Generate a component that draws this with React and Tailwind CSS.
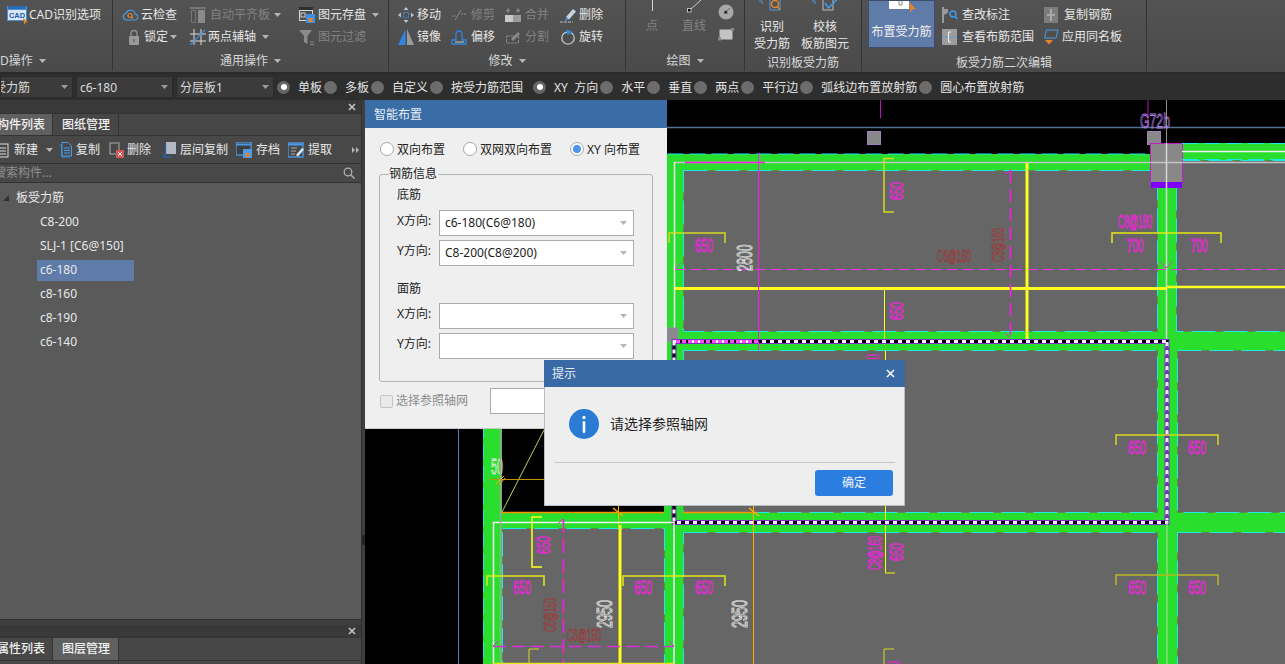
import React from "react";

const FONT = "font-['Noto_Sans','Noto_Sans_CJK_SC',sans-serif]";
const CAD_FONT = "'Liberation Sans', sans-serif";

const Caret = ({ className = "" }) => (
  <svg width="7" height="4" viewBox="0 0 7 4" className={"shrink-0 " + className}>
    <path d="M0 0h7L3.5 4z" fill="#b5b5b5" />
  </svg>
);

const S = ({ children }) => (
  <svg width="16" height="16" viewBox="0 0 16 16" fill="none" className="shrink-0">
    {children}
  </svg>
);

// ribbon and toolbar icons
const icons = {
  cad: (
    <svg width="22" height="20" viewBox="0 0 22 20" className="shrink-0">
      <rect x="0" y="1" width="20" height="15" fill="#4a90d9" />
      <rect x="1" y="1" width="18" height="3" fill="#2a6cb0" />
      <rect x="1" y="5" width="18" height="10" fill="#d8e6f5" />
      <text x="10" y="13" textAnchor="middle" fontSize="7.5" fontWeight="700" fontFamily={CAD_FONT} fill="#1f5fa8">CAD</text>
      <path d="M16 13l5 4-2.5.5-1 2.5z" fill="#e8842a" />
    </svg>
  ),
  cloud: (
    <S>
      <path d="M4 13h8.5a3 3 0 0 0 .5-6 4.5 4.5 0 0 0-8.6-1A3.6 3.6 0 0 0 4 13z" stroke="#4a9be8" strokeWidth="1.2" />
      <circle cx="8" cy="8.5" r="2" stroke="#e8842a" strokeWidth="1.2" />
      <path d="M9.5 10l1.5 1.5" stroke="#e8842a" strokeWidth="1.2" />
    </S>
  ),
  align: (
    <S>
      <path d="M0 1h16" stroke="#777" strokeWidth="2" />
      <rect x="1.5" y="3.5" width="4" height="12" stroke="#777" />
      <rect x="8" y="3" width="7" height="13" fill="#8a8a8a" />
    </S>
  ),
  save: (
    <S>
      <rect x="0" y="0" width="14" height="14" fill="#d8d8d8" />
      <rect x="0" y="0" width="14" height="3" fill="#2e2e2e" />
      <rect x="1" y="4" width="12" height="9" fill="#4d4d4d" />
      <rect x="2" y="6" width="4" height="4" stroke="#cfcfcf" />
      <rect x="7" y="7" width="9" height="9" fill="#3f8fe0" />
      <rect x="9.5" y="11" width="4" height="4" fill="#e8842a" />
    </S>
  ),
  lock: (
    <S>
      <path d="M5 7V4.5a3 3 0 0 1 6 0V7" stroke="#8f8f8f" strokeWidth="1.4" />
      <rect x="3" y="7" width="10" height="9" rx="1" fill="#9a9a9a" />
      <path d="M8 10v3" stroke="#666" strokeWidth="1.4" />
    </S>
  ),
  axis: (
    <S>
      <path d="M4 0v16M11 0v16M0 5h16M0 12h16" stroke="#d8d8d8" />
      <path d="M0 16L15 1" stroke="#3f8fe0" strokeWidth="1.2" />
    </S>
  ),
  filter: (
    <S>
      <path d="M0 1h13L8.5 7v8L5 13V7z" fill="#8a8a8a" />
      <path d="M11 13h4M11 15.5h4" stroke="#8a8a8a" />
    </S>
  ),
  move: (
    <S>
      <path d="M8 0l2.5 3h-5zM8 16l2.5-3h-5zM0 8l3-2.5v5zM16 8l-3-2.5v5z" fill="#b8c4d0" />
      <rect x="5.5" y="5.5" width="5" height="5" stroke="#3f8fe0" strokeDasharray="2 1" />
    </S>
  ),
  trim: (
    <S>
      <path d="M1 9h4M10 7h5" stroke="#8a8a8a" strokeDasharray="2 1" />
      <path d="M4 13L10 3" stroke="#8a8a8a" />
    </S>
  ),
  merge: (
    <S>
      <rect x="0" y="8" width="16" height="7" fill="#9a9a9a" />
      <rect x="0" y="8" width="8" height="7" fill="#c8c8c8" />
      <path d="M3 1v5M1 3.5h4M13 1v5M11 3.5h4" stroke="#8f8f8f" />
    </S>
  ),
  erase: (
    <S>
      <path d="M6 10l7-8 3 2.5-7 8z" fill="#c9d3de" />
      <path d="M6 10l3 2.5-4 1.5z" fill="#3f8fe0" />
      <path d="M0 15h13" stroke="#c0c0c0" strokeDasharray="3 1" />
    </S>
  ),
  mirror: (
    <S>
      <path d="M7.5 0v16H0z" fill="#2f86e0" />
      <path d="M9 0v16h7z" fill="#9a9a9a" />
    </S>
  ),
  offset: (
    <S>
      <path d="M1 15v-4h4V5a3 3 0 0 1 6 0v6h4v4z" stroke="#2f86e0" strokeWidth="1.3" />
      <path d="M4 13h9" stroke="#d0d0d0" />
    </S>
  ),
  split: (
    <S>
      <rect x="1.5" y="7" width="12" height="7" stroke="#8a8a8a" strokeDasharray="3 1" />
      <path d="M6 10l7-7 2 2-7 7z" fill="#8a8a8a" />
    </S>
  ),
  rotate: (
    <S>
      <circle cx="8" cy="9" r="6.2" stroke="#c8c8c8" strokeWidth="1.3" />
      <path d="M7 0l6 3.2-6 3z" fill="#2f86e0" />
    </S>
  ),
  mark: (
    <S>
      <path d="M1 0v16" stroke="#9a9a9a" strokeWidth="2" />
      <path d="M2 2h4v4l-4 2z" fill="#9a9a9a" />
      <circle cx="11" cy="7" r="3" stroke="#3f9bef" strokeWidth="1.4" />
      <path d="M13 9.5l2.5 2.5" stroke="#3f9bef" strokeWidth="1.6" />
    </S>
  ),
  range: (
    <S>
      <rect x="0" y="0" width="15" height="16" fill="#9c9c9c" />
      <path d="M0 8h15" stroke="#4a9be8" strokeDasharray="2 1" />
      <path d="M9 3H6.5v10H9" stroke="#eee" />
    </S>
  ),
  copybar: (
    <S>
      <rect x="1" y="0" width="14" height="16" fill="#7d7d7d" />
      <path d="M8 2v12M4 8h8" stroke="#a8a8a8" strokeWidth="2" />
    </S>
  ),
  same: (
    <S>
      <path d="M3.5 1H15l-2 8H1.5z" stroke="#4a9be8" />
      <path d="M2 11h8l-4 4.5z" fill="#e8842a" />
    </S>
  ),
  doc: (
    <S>
      <path d="M1.5 3h2v12h8v-1" stroke="#2f86e0" />
      <path d="M4 .5h6l3.5 3.5v10H4z" stroke="#4a9be8" />
      <path d="M6 6h6M6 8.5h6M6 11h6" stroke="#4a9be8" />
    </S>
  ),
  del: (
    <S>
      <rect x="1" y="1" width="9" height="11" stroke="#aaa" />
      <rect x="7" y="8" width="8" height="8" fill="#d95555" />
      <path d="M9 10l4 4M13 10l-4 4" stroke="#fff" />
    </S>
  ),
  floor: (
    <S>
      <rect x="4" y="0" width="10" height="12" fill="#b4b8c4" />
      <path d="M3.5 3v10h-2v2h7v-2" stroke="#2c5f9e" strokeWidth="1.4" />
    </S>
  ),
  archive: (
    <S>
      <rect x="0" y="0" width="15" height="13" stroke="#4a9be8" strokeWidth="1.3" fill="#3f3f3f" />
      <path d="M0 2.5h15" stroke="#4a9be8" strokeWidth="2" />
      <rect x="7" y="7" width="9" height="9" fill="#4a9be8" />
      <rect x="9.5" y="11" width="4" height="4" fill="#e8842a" />
    </S>
  ),
  extract: (
    <S>
      <rect x="0" y="1" width="15" height="14" stroke="#4a9be8" strokeWidth="1.3" />
      <path d="M0 2.5h15" stroke="#4a9be8" strokeWidth="2" />
      <path d="M3 6h6M3 9h5M3 12h4" stroke="#aaa" />
      <path d="M8 13l6-7 2 1.5-6 7z" fill="#dfe6ee" />
    </S>
  ),
  newdoc: (
    <S>
      <rect x="-4" y="2" width="12" height="13" stroke="#ddd" />
      <path d="M-2 6h8M-2 9h8M-2 12h8" stroke="#ddd" />
    </S>
  ),
};

const Tool = ({ icon, w = "w-[19px]", label, off, caret, gap = "ml-[6px]" }) => (
  <div className="h-[22px] flex items-center whitespace-nowrap">
    <span className={w + " shrink-0 flex"}>{icons[icon]}</span>
    <span className={off ? "text-[#828282]" : "text-[#e6e6e6]"}>{label}</span>
    {caret && <Caret className={gap} />}
  </div>
);

const Group = ({ w, label, caret, labelClass = "justify-center", children }) => (
  <div className={w + " h-[71px] shrink-0 flex flex-col border-r border-[#333333]"}>
    <div className="h-[51px] flex relative">{children}</div>
    <div className={"h-[20px] flex items-center gap-[6px] text-[#d8d8d8] " + labelClass}>
      {label}
      {caret && <Caret />}
    </div>
  </div>
);

const Ribbon = () => (
  <div className="h-[74px] flex bg-gradient-to-b from-[#535353] to-[#4a4a4a] border-b-2 border-[#2a2a2a] text-[12px] leading-none">
    <Group w="w-[113px]" label="D操作" caret labelClass="justify-start">
      <div className="pl-[7px] pt-[4px]">
        <div className="h-[22px] flex items-center text-[#e6e6e6] whitespace-nowrap">
          {icons.cad}
          <span>CAD识别选项</span>
        </div>
      </div>
    </Group>
    <Group w="w-[276px]" label="通用操作" caret>
      <div className="pl-[9px] pt-[4px] flex">
        <div className="w-[68px]">
          <Tool icon="cloud" label="云检查" />
          <Tool icon="lock" w="w-[22px] pl-[4px]" label="锁定" caret gap="ml-[2px]" />
        </div>
        <div className="w-[109px]">
          <Tool icon="align" w="w-[20px]" label="自动平齐板" off caret gap="ml-[4px]" />
          <Tool icon="axis" w="w-[18px]" label="两点辅轴" caret />
        </div>
        <div>
          <Tool icon="save" label="图元存盘" caret />
          <Tool icon="filter" label="图元过滤" off />
        </div>
      </div>
    </Group>
    <Group w="w-[237px]" label="修改" caret>
      <div className="pl-[9px] pt-[4px] flex">
        <div className="w-[53px]">
          <Tool icon="move" label="移动" />
          <Tool icon="mirror" label="镜像" />
        </div>
        <div className="w-[54px]">
          <Tool icon="trim" w="w-[20px]" label="修剪" off />
          <Tool icon="offset" w="w-[20px]" label="偏移" />
        </div>
        <div className="w-[55px]">
          <Tool icon="merge" w="w-[20px]" label="合并" off />
          <Tool icon="split" w="w-[20px]" label="分割" off />
        </div>
        <div>
          <Tool icon="erase" label="删除" />
          <Tool icon="rotate" label="旋转" />
        </div>
      </div>
    </Group>
    <Group w="w-[119px]" label="绘图" caret>
      <div className="pl-[8px] flex overflow-hidden w-full h-full">
        <div className="w-[36px] flex flex-col items-center">
          <div className="h-[11px] w-px bg-[#d0d0d0]" />
          <span className="mt-[9px] text-[#828282]">点</span>
        </div>
        <div className="w-[48px] flex flex-col items-center">
          <svg width="16" height="13" viewBox="0 0 16 13"><path d="M15 0L5 9" stroke="#d0d0d0" /><rect x="1.5" y="8.5" width="3.5" height="3.5" stroke="#c0c0c0" /></svg>
          <span className="mt-[7px] text-[#828282]">直线</span>
        </div>
        <div className="flex flex-col gap-[8px] pt-[4px]">
          <svg width="16" height="16" viewBox="0 0 16 16"><circle cx="8" cy="8" r="7.5" fill="#a8a8a8" /><rect x="6.5" y="7" width="2.5" height="2.5" stroke="#666" /><path d="M9 7l3-3" stroke="#666" /></svg>
          <svg width="16" height="13" viewBox="0 0 16 13"><rect x="1.5" y="1.5" width="13" height="10" fill="#c4c4c4" /><rect x="0" y="9.5" width="3" height="3" fill="#888" /><rect x="13" y="0" width="3" height="3" fill="#888" /></svg>
        </div>
      </div>
    </Group>
    <Group w="w-[117px]" label="识别板受力筋" labelClass="justify-center pt-[4px]">
      <div className="flex pl-[3px] w-full">
        <div className="w-[48px] flex flex-col items-center text-[#e6e6e6]">
          <svg width="26" height="11" viewBox="0 0 26 11" fill="none"><path d="M0 1h3v3" stroke="#4a9be8" /><rect x="11" y="-3" width="10" height="13" stroke="#4a9be8" /><circle cx="16" cy="4" r="3.5" stroke="#e8842a" strokeWidth="1.5" /><path d="M18 6.5l3 3" stroke="#e8842a" strokeWidth="1.5" /></svg>
          <span className="mt-[10px]">识别</span>
          <span className="mt-[5px] whitespace-nowrap">受力筋</span>
        </div>
        <div className="w-[58px] flex flex-col items-center text-[#e6e6e6]">
          <svg width="26" height="11" viewBox="0 0 26 11" fill="none"><path d="M0 1h3v3" stroke="#4a9be8" /><rect x="11" y="-3" width="10" height="13" stroke="#bbb" /><path d="M13 3l3.5 5 8-8" stroke="#3f9bef" strokeWidth="1.7" /></svg>
          <span className="mt-[10px]">校核</span>
          <span className="mt-[5px] whitespace-nowrap">板筋图元</span>
        </div>
      </div>
    </Group>
    <Group w="w-[285px]" label="板受力筋二次编辑" labelClass="justify-center pt-[4px]">
      <div className="pl-[6px] flex">
        <div className="w-[67px] h-[48px] bg-[#5f7ba8] border border-[#3d4c68] flex flex-col items-center overflow-hidden">
          <svg width="30" height="12" viewBox="0 0 30 12"><rect x="2" y="-2" width="20" height="10" fill="#fff" /><path d="M12 0v4h3V0" fill="none" stroke="#8a8a8a" /><path d="M22 1l7 7-4 .5-1.500 3.500z" fill="#e8842a" /></svg>
          <span className="mt-[13px] text-[#f0f0f0] whitespace-nowrap">布置受力筋</span>
        </div>
        <div className="pl-[7px] pt-[4px] w-[108px]">
          <Tool icon="mark" w="w-[20px]" label="查改标注" />
          <Tool icon="range" w="w-[20px]" label="查看布筋范围" />
        </div>
        <div className="pt-[4px]">
          <Tool icon="copybar" w="w-[21px]" label="复制钢筋" />
          <Tool icon="same" w="w-[19px]" label="应用同名板" />
        </div>
      </div>
    </Group>
    <div className="flex-1" />
  </div>
);

const Select = ({ w, value, clip }) => (
  <div className={w + " h-[22px] mr-[3px] bg-[#3b3b3b] border border-[#2a2a2a] flex items-center pl-[3px] pr-[4px] justify-between overflow-hidden shrink-0"}>
    <span className={"pt-[2px] text-[#dcdcdc] whitespace-nowrap " + (clip ? "-ml-[10px]" : "")}>{value}</span>
    <Caret className="opacity-80" />
  </div>
);

const optionRadios = [
  ["单板", true], ["多板"], ["自定义"], ["按受力筋范围"], ["XY  方向", true, "ml-[8px]"], ["水平"], ["垂直"], ["两点"], ["平行边"], ["弧线边布置放射筋"], ["圆心布置放射筋"],
];

const OptionBar = () => (
  <div className="h-[26px] bg-[#2e2e2e] flex items-center text-[12px] leading-none">
    <Select w="w-[73px]" value="受力筋" clip />
    <Select w="w-[97px]" value="c6-180" />
    <Select w="w-[98px]" value="分层板1" />
    <div className="flex items-center">
      {optionRadios.map(([label, on, extra]) => (
        <div key={label} className={"flex items-center mr-[2px] " + (extra || "")}>
          {on ? (
            <span className="w-[13px] h-[13px] rounded-full bg-[#666666] flex items-center justify-center shrink-0">
              <span className="w-[6px] h-[6px] rounded-full bg-white" />
            </span>
          ) : (
            <span className="w-[13px] h-[13px] rounded-full bg-[#6c6c6c] shrink-0" />
          )}
          <span className="ml-[8px] pt-[2px] text-[#e4e4e4] whitespace-pre">{label}</span>
        </div>
      ))}
    </div>
  </div>
);

const CloseX = () => (
  <svg width="8" height="8" viewBox="0 0 8 8"><path d="M1 1l6 6M7 1L1 7" stroke="#c4c4c4" strokeWidth="1.6" /></svg>
);

const PanelHead = ({ h }) => (
  <div className={h + " bg-[#393939] flex items-center justify-end pr-[5px]"}>
    <CloseX />
  </div>
);

const Tab = ({ w, active, label, clip }) => (
  <div className={w + " h-full flex items-center overflow-hidden border-r border-[#333333] font-medium whitespace-nowrap text-[#f0f0f0] " + (active ? "bg-[#606060]" : "bg-[#474747]")}>
    <span className={clip ? "-ml-[3px]" : "pl-[9px]"}>{label}</span>
  </div>
);

const treeItems = ["C8-200", "SLJ-1 [C6@150]", "c6-180", "c8-160", "c8-190", "c6-140"];

const TbBtn = ({ icon, label, w }) => (
  <div className={w + " flex items-center whitespace-nowrap text-[#e8e8e8] shrink-0"}>
    <span className="w-[18px] flex shrink-0">{icons[icon]}</span>
    {label}
  </div>
);

const LeftPanel = () => (
  <div className="w-[365px] shrink-0 flex bg-[#3e3e3e] text-[12px] leading-none overflow-hidden">
    <div className="w-[362px] flex flex-col border-r border-[#2f2f2f]">
      <PanelHead h="h-[13px]" />
      <div className="h-[23px] flex bg-[#474747] border-y border-[#333333]">
        <Tab w="w-[53px]" active label="构件列表" clip />
        <Tab w="w-[66px]" label="图纸管理" />
      </div>
      <div className="h-[28px] flex items-center bg-[#484848] border-b border-[#333333] relative">
        <TbBtn icon="newdoc" w="w-[58px]" label={<span className="flex items-center gap-[8px] -ml-[4px]">新建<Caret /></span>} />
        <TbBtn icon="doc" w="w-[51px]" label="复制" />
        <TbBtn icon="del" w="w-[53px]" label="删除" />
        <TbBtn icon="floor" w="w-[74px]" label="层间复制" />
        <TbBtn icon="archive" w="w-[52px]" label={<span className="ml-[2px]">存档</span>} />
        <TbBtn icon="extract" w="w-[58px]" label={<span className="ml-[2px]">提取</span>} />
        <svg width="7" height="6" viewBox="0 0 7 6" className="ml-[6px]"><path d="M0 0l3 3-3 3zM4 0l3 3-3 3z" fill="#b5b5b5" /></svg>
      </div>
      <div className="h-[19px] flex items-center justify-between bg-[#484848] border-b border-[#333333] pr-[6px] overflow-hidden">
        <span className="text-[#8f8f8f] -ml-[6px] whitespace-nowrap">搜索构件...</span>
        <svg width="12" height="12" viewBox="0 0 12 12" fill="none"><circle cx="5" cy="5" r="3.8" stroke="#b0b0b0" strokeWidth="1.3" /><path d="M8 8l3.5 3.5" stroke="#b0b0b0" strokeWidth="1.5" /></svg>
      </div>
      <div className="h-[437px] bg-[#5a5a5a] border-b border-[#333333] pt-[3px] text-[#e8e8e8]">
        <div className="h-[24px] flex items-center pl-[3px]">
          <svg width="6" height="6" viewBox="0 0 6 6"><path d="M6 0v6H0z" fill="#2f2f2f" /></svg>
          <span className="ml-[7px]">板受力筋</span>
        </div>
        {treeItems.map((t) => (
          <div key={t} className="h-[24px] flex items-center pl-[37px]">
            <span className={(t === "c6-180" ? "bg-[#5f7ba8] w-[97px]" : "") + " h-[21px] pl-[3px] flex items-center whitespace-nowrap"}>{t}</span>
          </div>
        ))}
      </div>
      <div className="h-[5px] bg-[#3e3e3e]" />
      <PanelHead h="h-[12px]" />
      <div className="h-[24px] flex bg-[#474747] border-y border-[#333333] shrink-0">
        <Tab w="w-[53px]" label="属性列表" clip />
        <Tab w="w-[66px]" active label="图层管理" />
      </div>
      <div className="flex-1 bg-[#484848]" />
    </div>
    <div className="flex-1 flex items-center">
      <div className="w-[3px] h-[10px] bg-[#222222] mt-[316px]" />
    </div>
  </div>
);

const GREEN = "#2ade2e";
const MAG = "#ff18e8";
const YEL = "#e6e618";
const ORG = "#ffb000";

const Cell = ({ x, y, w, h }) => (
  <g>
    <rect x={x} y={y} width={w} height={h} fill="#666666" stroke="#5f8f3a" />
    <rect x={x} y={y} width={w} height={h} fill="none" stroke="#1fe8e8" strokeDasharray="24 8" />
  </g>
);

const T = ({ x, y, w, c = MAG, r = 0, s = 19, sw = 0.85, children }) => (
  <text
    transform={`translate(${x} ${y}) rotate(${r})`}
    textAnchor="middle"
    dominantBaseline="central"
    fontFamily={CAD_FONT}
    fontSize={s}
    textLength={w}
    lengthAdjust="spacingAndGlyphs"
    fill="none"
    stroke={c}
    strokeWidth={sw}
  >
    {children}
  </text>
);

const Bracket = ({ x1, x2, y, c = "#d8d820" }) => (
  <path d={`M${x1} ${y + 10}V${y}H${x2}V${y + 10}`} fill="none" stroke={c} strokeWidth="1.5" />
);

const SideBracket = ({ x, y1, y2, c = "#d8d820" }) => (
  <path d={`M${x + 10} ${y1}H${x}V${y2}H${x + 10}`} fill="none" stroke={c} strokeWidth="1.5" />
);

const Canvas = () => (
  <div className="flex-1 bg-black overflow-hidden">
    <svg width="920" height="564" viewBox="365 100 920 564" className="block">
      <path d="M458.5 100V664" stroke="#4f82b8" />
      <rect x="667" y="154" width="618" height="510" fill={GREEN} />
      <rect x="1150" y="143" width="135" height="20" fill={GREEN} />
      <rect x="483" y="400" width="200" height="264" fill={GREEN} />
      <rect x="502" y="400" width="162" height="112" fill="#000" />
      <path d="M667.5 154H1150" stroke="#1fe8e8" strokeDasharray="16 6" />
      <path d="M483.5 400V664" stroke="#1fe8e8" strokeDasharray="16 6" />

      <Cell x={683.5} y={170.5} w={474} h={161} />
      <Cell x={1176.5} y={160.5} w={110} h={171} />
      <Cell x={683.5} y={350.5} w={474} h={162} />
      <Cell x={1177.5} y={350.5} w={110} h={162} />
      <Cell x={502.5} y={528.5} w={162} h={140} />
      <Cell x={683.5} y={532.5} w={474} h={140} />
      <Cell x={1177.5} y={532.5} w={110} h={140} />

      {/* top area */}
      <path d="M667 127.5H1285" stroke="#52708f" strokeWidth="1.5" />
      <path d="M880.5 100V118M1148 100V127" stroke="#c010c0" />
      <path d="M1166.5 100V143" stroke="#909090" />
      <T x={1155} y={121} w={30} c="#b080e0" s={20}>G72b</T>
      <rect x="867.5" y="131.5" width="13" height="13" fill="#888" stroke="#a080c0" />
      <rect x="1147.5" y="131.5" width="13" height="13" fill="#888" stroke="#a080c0" />
      <rect x="1150.5" y="143.5" width="32" height="39" fill="#888" stroke="#c020c0" />
      <rect x="1151" y="182" width="31" height="6" fill="#8000ff" />
      <path d="M1182 151.5H1285" stroke="#f0f0f0" strokeWidth="1.5" />
      <path d="M1182 143.5H1285M1182 159.5H1285" stroke="#1fe8e8" strokeDasharray="16 6" />

      {/* grid lines */}
      <path d="M674 162.5H1285" stroke="#c4c4c4" strokeWidth="1.5" />
      <path d="M674.5 162V341" stroke="#f4f4f4" strokeWidth="1.5" />
      <path d="M1166.5 143V340" stroke="#d8d8d8" strokeWidth="1.5" />
      <path d="M675 269.5H1285" stroke="#f030f0" strokeDasharray="11 5" />
      <path d="M675 288.5H1167" stroke="#ffff20" strokeWidth="3" />
      <path d="M1167 287H1285" stroke="#ffff20" strokeWidth="2.5" />
      <path d="M1027 163V339" stroke="#ffff20" strokeWidth="3" />
      <path d="M1010.5 170V338" stroke={MAG} strokeWidth="1.5" strokeDasharray="13 6" />
      <path d="M1010 170l-5 5M1010 338l-5-5" stroke={MAG} />
      <path d="M758.5 153V350" stroke={MAG} />
      <path d="M685 162.5H765" stroke={MAG} strokeWidth="1.5" />
      <path d="M884.5 288V345M885.5 350V573" stroke="#ffff20" />
      <path d="M885 573H895" stroke="#c8c820" strokeWidth="1.5" />

      <SideBracket x={884} y1={158.5} y2={212} />
      <T x={896} y={191} w={18} r={-90}>650</T>
      <T x={896} y={311} w={18} r={-90}>650</T>
      <Bracket x1={669} x2={725} y={233} />
      <T x={704} y={245} w={18}>650</T>
      <T x={744} y={258} w={27} r={-90} c="#f0f0f0" s={22}>2800</T>
      <T x={954} y={256} w={34} c="#9a3c3c" s={17}>C6@180</T>
      <T x={998} y={245} w={34} r={-90} c="#9a3c3c" s={17}>C8@160</T>
      <T x={1135} y={222} w={34} s={18}>C8@180</T>
      <Bracket x1={1112} x2={1221} y={233} c={YEL} />
      <T x={1135} y={245} w={17}>700</T>
      <T x={1199} y={245} w={17}>700</T>
      <path d="M1160 262l6 6 6-6M675 269l6-6" fill="none" stroke="#f030f0" />
      <rect x="667" y="328" width="11" height="13" fill="#888" stroke="#a080c0" />

      {/* selection */}
      <rect x="674" y="341.5" width="493" height="181" fill="none" stroke="#7a30c8" strokeWidth="5" />
      <rect x="674" y="341.5" width="493" height="181" fill="none" stroke="#0a0010" strokeWidth="3" />
      <rect x="674" y="341.5" width="493" height="181" fill="none" stroke="#f4f0ff" strokeWidth="3" strokeDasharray="4 4" />
      <path d="M1167 342V520" stroke="#7a30c8" strokeWidth="3" />
      <path d="M1167 342V520" stroke="#f0e8ff" strokeWidth="3" strokeDasharray="4 4" />
      <path d="M676 341.5H760" stroke="#ff50ff" strokeWidth="3" strokeDasharray="4 2" />
      <path d="M758.5 341V350" stroke={MAG} />
      <path d="M1167 523V664" stroke="#8fdc7a" strokeWidth="1.5" />

      {/* middle row */}
      <Bracket x1={1116} x2={1218} y={435} />
      <T x={1137} y={447} w={18}>650</T>
      <T x={1197} y={447} w={18}>650</T>
      <rect x="867" y="355" width="12" height="3.5" rx="1.7" fill="none" stroke={MAG} />

      {/* black window bottom-left */}
      <path d="M502 512L544 430" stroke="#b0d850" />
      <path d="M490 479.5H544" stroke="#c09000" />
      <path d="M500 457V500" stroke="#c09000" />
      <path d="M496 484l8-8M499 485l6-7" stroke={ORG} />
      <T x={497} y={466} w={12} c="#f0f0f0" s={22}>50</T>
      <path d="M502 512.5H664M683 512.5H757" stroke="#ff9000" strokeWidth="1.5" />
      <path d="M618.5 505V525" stroke={ORG} />
      <path d="M613 508l10 8" stroke={ORG} strokeWidth="1.5" />
      <path d="M749 508l10 8" stroke={ORG} strokeWidth="1.5" />

      {/* bottom row */}
      <path d="M493.5 664V522.5H674V664" fill="none" stroke="#f4f4f4" strokeWidth="1.5" />
      <path d="M500.5 429V664" stroke="#a0a0a0" strokeWidth="1.5" />
      <path d="M620 525V664" stroke="#ffff20" strokeWidth="3" />
      <path d="M753.5 505V664" stroke={ORG} />
      <path d="M563.5 519V664" stroke={MAG} strokeWidth="1.5" strokeDasharray="14 6" />
      <path d="M563 519l-5 5" stroke={MAG} />
      <path d="M493 646.5H674" stroke="#d830d8" strokeWidth="1.5" strokeDasharray="13 6" />
      <path d="M493 646l5-5M674 646l-5-5" stroke="#d830d8" />
      <path d="M493 663.5H674" stroke={YEL} strokeWidth="1.5" />
      <SideBracket x={532} y1={517} y2={567} c="#ffff20" />
      <T x={543} y={545} w={18} r={-90}>650</T>
      <Bracket x1={487} x2={544} y={576} c={YEL} />
      <T x={522} y={587} w={18}>650</T>
      <Bracket x1={623} x2={725} y={576} c={YEL} />
      <T x={643} y={587} w={18}>650</T>
      <T x={704} y={587} w={18}>650</T>
      <T x={604} y={614} w={28} r={-90} c="#f0f0f0" s={22}>2950</T>
      <T x={739} y={614} w={28} r={-90} c="#f0f0f0" s={22}>2950</T>
      <T x={550} y={615} w={34} r={-90} c="#9a3c3c" s={17}>C6@150</T>
      <T x={584} y={635} w={34} c="#9a3c3c" s={17}>C6@150</T>
      <path d="M529 664v-15h10" fill="none" stroke="#d8d820" />

      <Bracket x1={1116} x2={1218} y={575} c="#b8b820" />
      <T x={1137} y={587} w={18}>650</T>
      <T x={1197} y={587} w={18}>650</T>
      <T x={875} y={553} w={34} r={-90} s={18}>C8@160</T>
      <T x={896} y={552} w={18} r={-90}>650</T>
      <path d="M894 649H884V664" fill="none" stroke="#d8d820" />
      <rect x="888" y="662" width="13" height="6" rx="2" fill="none" stroke={MAG} />
    </svg>
  </div>
);

const Radio = ({ on, label }) => (
  <div className="flex items-center whitespace-nowrap">
    <span className="w-[14px] h-[14px] rounded-full border border-[#a8a8a8] bg-white flex items-center justify-center shrink-0">
      {on && <span className="w-[8px] h-[8px] rounded-full bg-[#4d94f0]" />}
    </span>
    <span className="ml-[3px] pt-[1px]">{label}</span>
  </div>
);

const Combo = ({ label, value }) => (
  <div className="flex items-center h-[26px] pl-[17px]">
    <span className="w-[42px] whitespace-nowrap -mt-[4px]">{label}</span>
    <div className="w-[195px] h-[26px] bg-white border border-[#ababab] flex items-center justify-between pl-[5px] pr-[6px]">
      <span className="whitespace-nowrap">{value}</span>
      <Caret />
    </div>
  </div>
);

const SmartDialog = () => (
  <div className="absolute left-[365px] top-[100px] w-[302px] h-[329px] bg-[#efefef] text-[12px] leading-none text-[#222222] border-b border-[#c8c8c8]">
    <div className="h-[28px] bg-[#3a6ca6] flex items-center pl-[9px] pt-[2px] text-[#e8eef6]">智能布置</div>
    <div className="flex items-start pt-[14px] pl-[15px] h-[46px]">
      <div className="w-[83px]"><Radio label="双向布置" /></div>
      <div className="w-[107px]"><Radio label="双网双向布置" /></div>
      <Radio on label="XY 向布置" />
    </div>
    <div className="ml-[14px] w-[274px] h-[208px] border border-[#b4b4b4] rounded-[3px] relative">
      <span className="absolute -top-[7px] left-[9px] bg-[#efefef] pr-[1px]">钢筋信息</span>
      <div className="pt-[14px] h-[35px] pl-[17px]">底筋</div>
      <Combo label="X方向:" value="c6-180(C6@180)" />
      <div className="h-[4px]" />
      <Combo label="Y方向:" value="C8-200(C8@200)" />
      <div className="h-[37px] pl-[17px] pt-[17px]">面筋</div>
      <Combo label="X方向:" value="" />
      <div className="h-[4px]" />
      <Combo label="Y方向:" value="" />
    </div>
    <div className="flex items-center pl-[15px] pt-[6px]">
      <span className="w-[13px] h-[13px] border border-[#c4c4c4] rounded-[2px] bg-[#eaeaea] shrink-0" />
      <span className="ml-[3px] text-[#8c8c8c] whitespace-nowrap">选择参照轴网</span>
      <div className="ml-[22px] w-[80px] h-[26px] bg-white border border-[#ababab]" />
    </div>
  </div>
);

const AlertDialog = () => (
  <div className="absolute left-[544px] top-[360px] w-[361px] h-[146px] bg-[#eeeeee] border border-[#b8bcc4] border-t-0 text-[12px] leading-none flex flex-col">
    <div className="h-[27px] bg-[#396aa5] -mx-px flex items-center justify-between pl-[8px] pr-[10px] text-[#e8eef6]">
      提示
      <svg width="9" height="9" viewBox="0 0 9 9"><path d="M1 1l7 7M8 1L1 8" stroke="#fff" strokeWidth="1.5" /></svg>
    </div>
    <div className="h-[76px] mx-[9px] border-b border-[#c6c6c6] flex items-start pt-[22px] pl-[15px] text-[#1e1e1e]">
      <svg width="30" height="30" viewBox="0 0 30 30" className="shrink-0">
        <circle cx="15" cy="15" r="15" fill="#2a7bd4" />
        <circle cx="15" cy="8.5" r="1.7" fill="#fff" />
        <rect x="13.7" y="12" width="2.6" height="12" rx="1.3" fill="#fff" />
      </svg>
      <span className="ml-[11px] mt-[8px] text-[14px] whitespace-nowrap">请选择参照轴网</span>
    </div>
    <div className="flex justify-end pr-[11px] pt-[7px]">
      <div className="w-[78px] h-[26px] rounded-[3px] bg-[#2b7de0] text-[#f0f4fa] flex items-center justify-center">确定</div>
    </div>
  </div>
);

export default function App() {
  return (
    <div className={"relative w-[1285px] h-[664px] overflow-hidden flex flex-col bg-black " + FONT}>
      <Ribbon />
      <OptionBar />
      <div className="flex-1 flex min-h-0">
        <LeftPanel />
        <Canvas />
      </div>
      <SmartDialog />
      <AlertDialog />
    </div>
  );
}
